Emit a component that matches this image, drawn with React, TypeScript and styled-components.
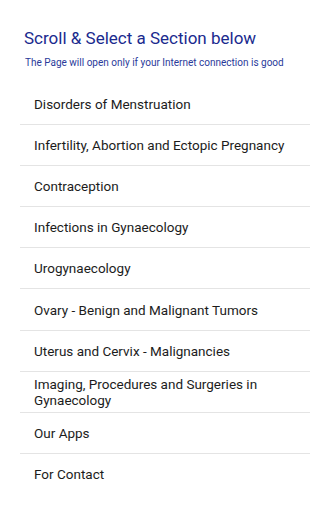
import styled, { createGlobalStyle } from "styled-components";

const GlobalStyle = createGlobalStyle`
  body {
    margin: 0;
    background: #ffffff;
    font-family: Roboto, "Liberation Sans", sans-serif;
  }
`;

const Page = styled.div`
  display: flex;
  flex-direction: column;
  padding-top: 28px;
`;

const Header = styled.div`
  display: flex;
  flex-direction: column;
  padding-left: 24px;
  height: 56px;
`;

const Title = styled.h1`
  margin: 0;
  font-size: 17px;
  line-height: 21px;
  font-weight: 400;
  color: #1a2a8e;
`;

const Note = styled.p`
  margin: 8px 0 0 1px;
  font-size: 10px;
  line-height: 12px;
  color: #2a3a9a;
`;

const List = styled.ul`
  list-style: none;
  margin: 0 20px;
  padding: 0;
`;

const Item = styled.li<{ $last?: boolean }>`
  display: flex;
  align-items: center;
  height: 40.1px;
  padding: 0 14px;
  font-size: 13.5px;
  line-height: 16px;
  color: #1c1c1c;
  border-bottom: 1px solid ${(p) => (p.$last ? "transparent" : "#e4e4e4")};
  cursor: pointer;
`;

const sections = [
  "Disorders of Menstruation",
  "Infertility, Abortion and Ectopic Pregnancy",
  "Contraception",
  "Infections in Gynaecology",
  "Urogynaecology",
  "Ovary - Benign and Malignant Tumors",
  "Uterus and Cervix - Malignancies",
  "Imaging, Procedures and Surgeries in Gynaecology",
  "Our Apps",
  "For Contact",
];

const App = () => {
  return (
    <Page>
      <GlobalStyle />
      <Header>
        <Title>Scroll &amp; Select a Section below</Title>
        <Note>The Page will open only if your Internet connection is good</Note>
      </Header>
      <List>
        {sections.map((s, i) => (
          <Item key={s} $last={i === sections.length - 1}>
            {s}
          </Item>
        ))}
      </List>
    </Page>
  );
};

export default App;
